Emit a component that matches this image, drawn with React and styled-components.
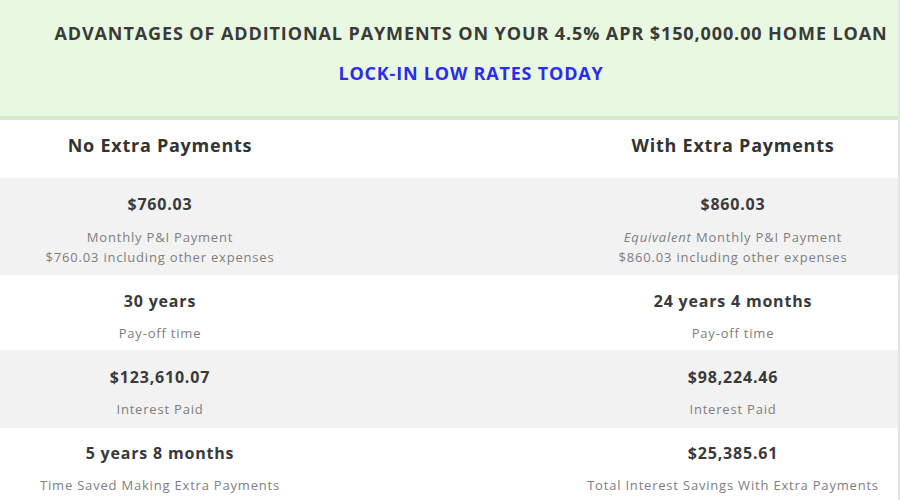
import React from 'react';
import styled, { createGlobalStyle } from 'styled-components';

const GlobalStyle = createGlobalStyle`
  html, body {
    margin: 0;
    padding: 0;
    background: #fff;
    font-family: 'Open Sans', 'Liberation Sans', sans-serif;
  }
`;

const Page = styled.div`
  width: 900px;
  height: 500px;
  overflow: hidden;
  box-sizing: border-box;
  border-right: 2px solid #e4e4e4;
  background: #fff;
`;

const Banner = styled.div`
  background: #e9f8e1;
  border-bottom: 4px solid #d3eccb;
  box-sizing: border-box;
  height: 120px;
  padding: 22px 0 0 44px;
  text-align: center;
`;

const Title = styled.div`
  font-size: 18px;
  font-weight: 700;
  letter-spacing: 0.9px;
  color: #3a3a3a;
  line-height: 22px;
  white-space: nowrap;
`;

const CtaLink = styled.a`
  display: inline-block;
  margin-top: 18px;
  font-size: 18px;
  font-weight: 700;
  letter-spacing: 0.8px;
  color: #2c2cee;
  text-decoration: none;
  line-height: 22px;
`;

const Row = styled.div`
  display: grid;
  grid-template-columns: 320px 1fr 330px;
  height: ${p => p.$h}px;
  background: ${p => (p.$shade ? '#f2f2f2' : '#fff')};
`;

const Cell = styled.div`
  display: flex;
  flex-direction: column;
  align-items: center;
  padding-top: ${p => p.$top || 0}px;
`;

const Heading = styled.div`
  font-size: 18px;
  font-weight: 700;
  letter-spacing: 0.75px;
  color: #333;
  line-height: 24px;
  white-space: nowrap;
`;

const Value = styled.div`
  font-size: 16px;
  font-weight: 700;
  letter-spacing: 0.8px;
  color: #3a3a3a;
  line-height: 20px;
  margin-bottom: ${p => p.$gap}px;
  white-space: nowrap;
`;

const Label = styled.div`
  font-size: 13px;
  letter-spacing: 0.8px;
  color: #7e7e7e;
  line-height: 20px;
  white-space: nowrap;
  text-align: center;
`;

const rows = [
  {
    h: 97, shade: true, top: 16, gap: 13,
    left: { value: '$760.03', lines: ['Monthly P&I Payment', '$760.03 including other expenses'] },
    right: { value: '$860.03', lines: [<><em>Equivalent</em> Monthly P&I Payment</>, '$860.03 including other expenses'] },
  },
  {
    h: 75, top: 16, gap: 12,
    left: { value: '30 years', lines: ['Pay-off time'] },
    right: { value: '24 years 4 months', lines: ['Pay-off time'] },
  },
  {
    h: 78, shade: true, top: 17, gap: 12,
    left: { value: '$123,610.07', lines: ['Interest Paid'] },
    right: { value: '$98,224.46', lines: ['Interest Paid'] },
  },
  {
    h: 72, top: 15, gap: 12,
    left: { value: '5 years 8 months', lines: ['Time Saved Making Extra Payments'] },
    right: { value: '$25,385.61', lines: ['Total Interest Savings With Extra Payments'] },
  },
];

const Side = ({ data, top, gap }) => (
  <Cell $top={top}>
    <Value $gap={gap}>{data.value}</Value>
    {data.lines.map((l, i) => <Label key={i}>{l}</Label>)}
  </Cell>
);

export default function App() {
  return (
    <Page>
      <GlobalStyle />
      <Banner>
        <Title>ADVANTAGES OF ADDITIONAL PAYMENTS ON YOUR 4.5% APR $150,000.00 HOME LOAN</Title>
        <CtaLink href="#">LOCK-IN LOW RATES TODAY</CtaLink>
      </Banner>
      <Row $h={58}>
        <Cell $top={13}><Heading>No Extra Payments</Heading></Cell>
        <div />
        <Cell $top={13}><Heading>With Extra Payments</Heading></Cell>
      </Row>
      {rows.map((r, i) => (
        <Row key={i} $h={r.h} $shade={r.shade}>
          <Side data={r.left} top={r.top} gap={r.gap} />
          <div />
          <Side data={r.right} top={r.top} gap={r.gap} />
        </Row>
      ))}
    </Page>
  );
}
